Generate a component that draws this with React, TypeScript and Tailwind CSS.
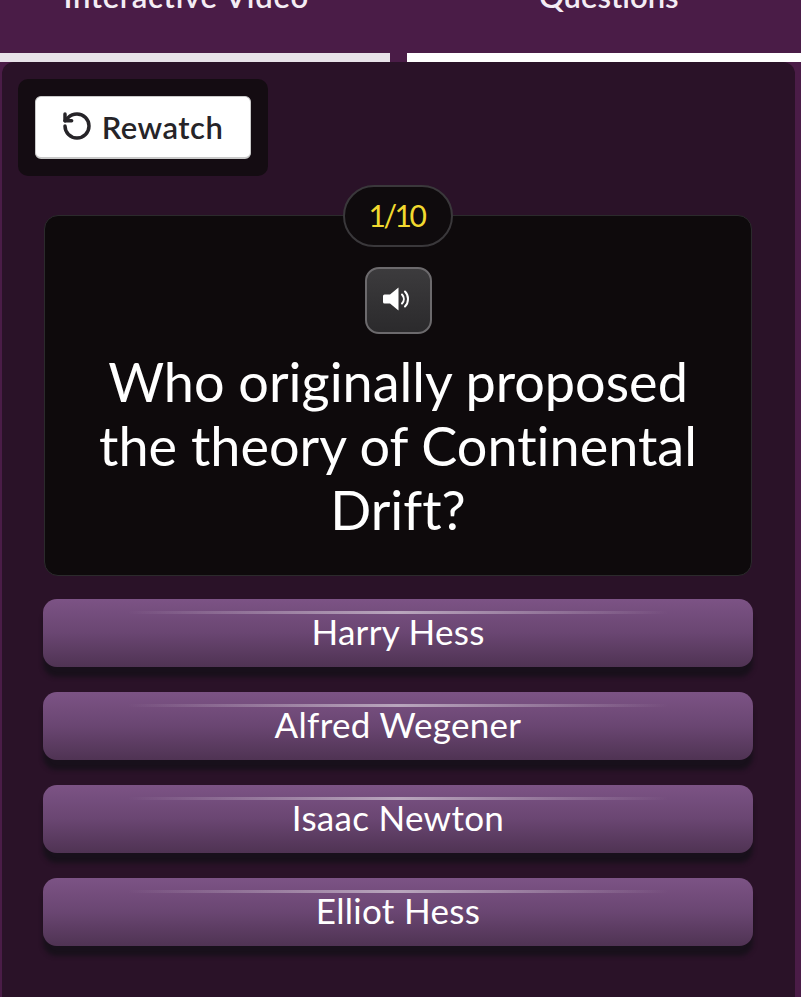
import React from 'react';
import { RotateCcw } from 'lucide-react';

const answers = ['Harry Hess', 'Alfred Wegener', 'Isaac Newton', 'Elliot Hess'];

const AnswerButton: React.FC<{ label: string }> = ({ label }) => (
  <button className="relative h-[67.5px] w-full rounded-[14px] bg-gradient-to-b from-[#7c5385] via-[#6a4672] to-[#4f3353] pb-[2px] text-[35px] leading-none tracking-[0.3px] text-white shadow-[0_10px_4px_rgba(20,16,24,0.8)]">
    <span className="absolute left-[12%] right-[12%] top-[12px] h-[3px] rounded-full bg-gradient-to-r from-transparent via-[#b9a6bd] to-transparent" />
    {label}
  </button>
);

export default function App() {
  return (
    <div className="h-[997px] w-[801px] overflow-hidden bg-[#4a1c47] font-['Lato','Noto_Sans',sans-serif] [font-variant-ligatures:none]">
      <div className="grid h-[53px] grid-cols-2 text-[31px] font-semibold leading-none text-[#f4ecf4]">
        <div className="-mt-[19px] pr-[28px] text-center tracking-[0.7px]">Interactive Video</div>
        <div className="-mt-[19px] pl-[16px] text-center">Questions</div>
      </div>
      <div className="flex h-[9px] gap-[17px]">
        <div className="w-[390px] bg-[#e8e2e9]" />
        <div className="flex-1 bg-white" />
      </div>
      <div className="ml-[2px] h-[935px] w-[793px] rounded-t-[12px] bg-[#2a1228] pl-[16px] pt-[17px]">
        <div className="h-[97px] w-[250px] rounded-[10px] bg-[#140c12] p-[17px]">
          <button className="flex h-[63px] w-[216px] items-center justify-center gap-[9px] rounded-[6px] border border-b-2 border-[#c9c9c9] bg-white pr-[2px] text-[31px] font-semibold leading-none tracking-[0.5px] text-[#262428]">
            <RotateCcw size={32} strokeWidth={2.6} className="-mt-[3px]" />
            Rewatch
          </button>
        </div>
        <div className="relative ml-[26px] mt-[39px] flex h-[361px] w-[708px] flex-col items-center rounded-[14px] border border-[#2b2a2c] bg-[#0e0a0c] pt-[51px]">
          <div className="absolute left-[298px] top-[-31px] flex h-[62px] w-[110px] items-center justify-center rounded-full border-2 border-[#3a383b] bg-[#0f0b0d] pb-[3px] pr-[3px] text-[30px] leading-none tracking-[-2.5px] text-[#f2d92f]">
            1/10
          </div>
          <button className="flex h-[67px] w-[67px] items-center justify-center rounded-[14px] border-2 border-[#6c6a6d] bg-gradient-to-b from-[#3c3b3d] to-[#2b2a2c]">
            <svg width="30" height="30" viewBox="0 0 30 30" fill="none" className="mb-[4px]">
              <path d="M1.5 10.5h5.5L15.5 3.5v23L7 19.5H1.5a1.5 1.5 0 0 1-1.500-1.500v-6a1.500 1.500 0 0 1 1.500-1.500Z" fill="#ffffff" />
              <path d="M19 10.500c2.400 2.600 2.400 6.400 0 9" stroke="#ffffff" strokeWidth="2" strokeLinecap="round" />
              <path d="M22 7.500c4 4 4 11 0 15" stroke="#ffffff" strokeWidth="2" strokeLinecap="round" />
            </svg>
          </button>
          <p className="mt-[16px] w-[640px] text-center text-[54px] leading-[64px] text-white">
            Who originally proposed the theory of Continental Drift?
          </p>
        </div>
        <div className="ml-[25px] mt-[23px] flex w-[710px] flex-col gap-[25.5px]">
          {answers.map((label) => (
            <AnswerButton key={label} label={label} />
          ))}
        </div>
      </div>
    </div>
  );
}
